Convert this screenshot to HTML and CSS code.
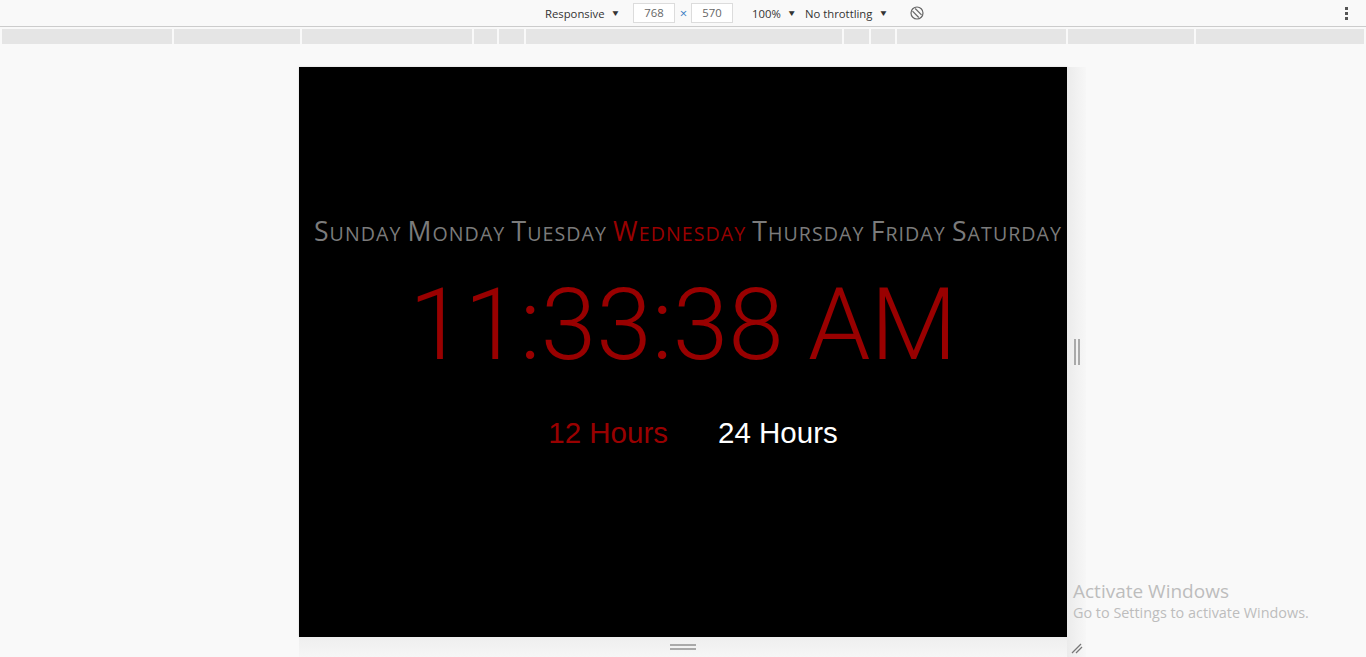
FILE: index.html
```html
<!DOCTYPE html>
<html lang="en">
<head>
<meta charset="utf-8">
<title>Clock</title>
<link rel="stylesheet" href="styles.css">
</head>
<body>
<div class="toolbar">
  <div class="tb-center">
    <span class="tb-item resp">Responsive <span class="caret">&#9660;</span></span>
    <span class="dim-box">768</span>
    <span class="times">&times;</span>
    <span class="dim-box">570</span>
    <span class="tb-item zoom">100% <span class="caret">&#9660;</span></span>
    <span class="tb-item throttle">No throttling <span class="caret">&#9660;</span></span>
    <svg class="rotate" width="16" height="16" viewBox="0 0 16 16" aria-hidden="true">
      <circle cx="8" cy="8" r="6" fill="none" stroke="#666" stroke-width="1.2"/>
      <line x1="3.5" y1="6.2" x2="9.8" y2="12.5" stroke="#666" stroke-width="1.2"/>
      <line x1="6.2" y1="3.5" x2="12.5" y2="9.8" stroke="#666" stroke-width="1.2"/>
    </svg>
  </div>
  <div class="kebab"><i></i><i></i><i></i></div>
</div>
<div class="mediabar">
  <span class="seg" style="width:170px"></span>
  <span class="seg" style="width:126px"></span>
  <span class="seg" style="width:170px"></span>
  <span class="seg" style="width:23px"></span>
  <span class="seg" style="width:25px"></span>
  <span class="seg" style="width:316px"></span>
  <span class="seg" style="width:25px"></span>
  <span class="seg" style="width:24px"></span>
  <span class="seg" style="width:169px"></span>
  <span class="seg" style="width:126px"></span>
  <span class="seg" style="width:168px"></span>
</div>
<div class="stage">
  <div class="device">
    <div class="days">
      <span class="day"><span class="cap">S</span>unday</span> <span class="day"><span class="cap">M</span>onday</span> <span class="day"><span class="cap">T</span>uesday</span> <span class="day today"><span class="cap">W</span>ednesday</span> <span class="day"><span class="cap">T</span>hursday</span> <span class="day"><span class="cap">F</span>riday</span> <span class="day"><span class="cap">S</span>aturday</span>
    </div>
    <div class="clock">11:33:38 AM</div>
    <div class="modes">
      <span class="mode active">12 Hours</span>
      <span class="mode">24 Hours</span>
    </div>
  </div>
  <div class="handle-right"><i></i><i></i></div>
  <div class="handle-bottom"><i></i><i></i></div>
  <div class="corner">
    <svg width="14" height="14" viewBox="0 0 14 14" aria-hidden="true">
      <line x1="2" y1="12" x2="11" y2="3" stroke="#777" stroke-width="1.2"/>
      <line x1="6" y1="12" x2="12" y2="6" stroke="#777" stroke-width="1.2"/>
    </svg>
  </div>
</div>
<div class="activate">
  <div class="act-title">Activate Windows</div>
  <div class="act-sub">Go to Settings to activate Windows.</div>
</div>
</body>
</html>
```

FILE: styles.css
```css
html, body {
  margin: 0;
  padding: 0;
}
body {
  width: 1366px;
  height: 657px;
  overflow: hidden;
  background: #f9f9f9;
  font-family: "Open Sans", "Noto Sans", sans-serif;
  position: relative;
}
.toolbar {
  height: 26px;
  border-bottom: 1px solid #cccccc;
  display: flex;
  align-items: center;
  padding-left: 545px;
  position: relative;
  background: #f9f9f9;
}
.tb-center {
  display: flex;
  align-items: center;
  font-size: 11.3px;
  color: #333;
}
.tb-item {
  white-space: nowrap;
  display: flex;
  align-items: center;
}
.caret {
  font-size: 10px;
  margin-left: 6px;
  color: #333;
  transform: scaleY(0.85);
}
.resp {
  width: 88px;
}
.dim-box {
  width: 40px;
  height: 18px;
  border: 1px solid #dcdcdc;
  background: #fff;
  color: #666;
  text-align: center;
  line-height: 18px;
}
.times {
  width: 15px;
  text-align: center;
  color: #3b7fc4;
  font-size: 13px;
  padding-left: 1px;
}
.zoom {
  margin-left: 19px;
  width: 53px;
}
.throttle {
  width: 104px;
}
.kebab {
  position: absolute;
  right: 18px;
  top: 7px;
  display: flex;
  flex-direction: column;
  gap: 2px;
}
.kebab i {
  display: block;
  width: 3px;
  height: 3px;
  background: #555;
}
.mediabar {
  display: flex;
  gap: 2px;
  margin: 2px 2px 0 2px;
  height: 15px;
}
.seg {
  display: block;
  height: 15px;
  background: #e5e5e5;
}
.stage {
  display: grid;
  grid-template-columns: 299px 768px 19px 1fr;
  grid-template-rows: 570px 20px;
  margin-top: 23px;
}
.device {
  grid-column: 2;
  grid-row: 1;
  background: #000;
  display: flex;
  flex-direction: column;
  align-items: center;
  box-shadow: 0 0 2px rgba(0,0,0,0.15);
}
.days {
  margin-top: 149px;
  padding-left: 10px;
  font-family: "Open Sans", sans-serif;
  font-size: 19.6px;
  text-transform: uppercase;
  letter-spacing: 1.05px;
  line-height: 30px;
  color: #7b7b7b;
  white-space: nowrap;
}
.cap {
  font-size: 26.6px;
}
.today {
  color: #990000;
}
.clock {
  margin-top: 21px;
  font-family: Roboto, sans-serif;
  font-weight: 300;
  font-size: 100px;
  line-height: 110px;
  color: #990000;
  white-space: nowrap;
}
.modes {
  margin-top: 35px;
  padding-left: 20px;
  display: flex;
  gap: 50px;
  font-family: "Liberation Sans", Arial, sans-serif;
  font-size: 29.5px;
  line-height: 36px;
  color: #fff;
}
.mode.active {
  color: #990000;
}
.handle-right {
  grid-column: 3;
  grid-row: 1;
  background: linear-gradient(to right, #ebebeb, #f7f7f7);
  display: flex;
  justify-content: center;
  align-items: center;
  gap: 2px;
}
.handle-right i {
  display: block;
  width: 2px;
  height: 26px;
  background: #a9a9a9;
}
.handle-bottom {
  grid-column: 2;
  grid-row: 2;
  background: linear-gradient(to bottom, #eeeeee, #f6f6f6);
  display: flex;
  flex-direction: column;
  align-items: center;
  justify-content: center;
  gap: 2px;
}
.handle-bottom i {
  display: block;
  width: 26px;
  height: 2px;
  background: #a9a9a9;
}
.corner {
  grid-column: 3;
  grid-row: 2;
  display: flex;
  align-items: flex-end;
  justify-content: center;
  padding-bottom: 2px;
  background: linear-gradient(to right, #ebebeb, #f7f7f7);
}
.activate {
  position: absolute;
  left: 1073px;
  top: 579px;
  font-family: "Open Sans", "Noto Sans", sans-serif;
  color: #bdbdbd;
}
.act-title {
  font-size: 19px;
  line-height: 24px;
}
.act-sub {
  font-size: 14.4px;
  line-height: 20px;
}
```
